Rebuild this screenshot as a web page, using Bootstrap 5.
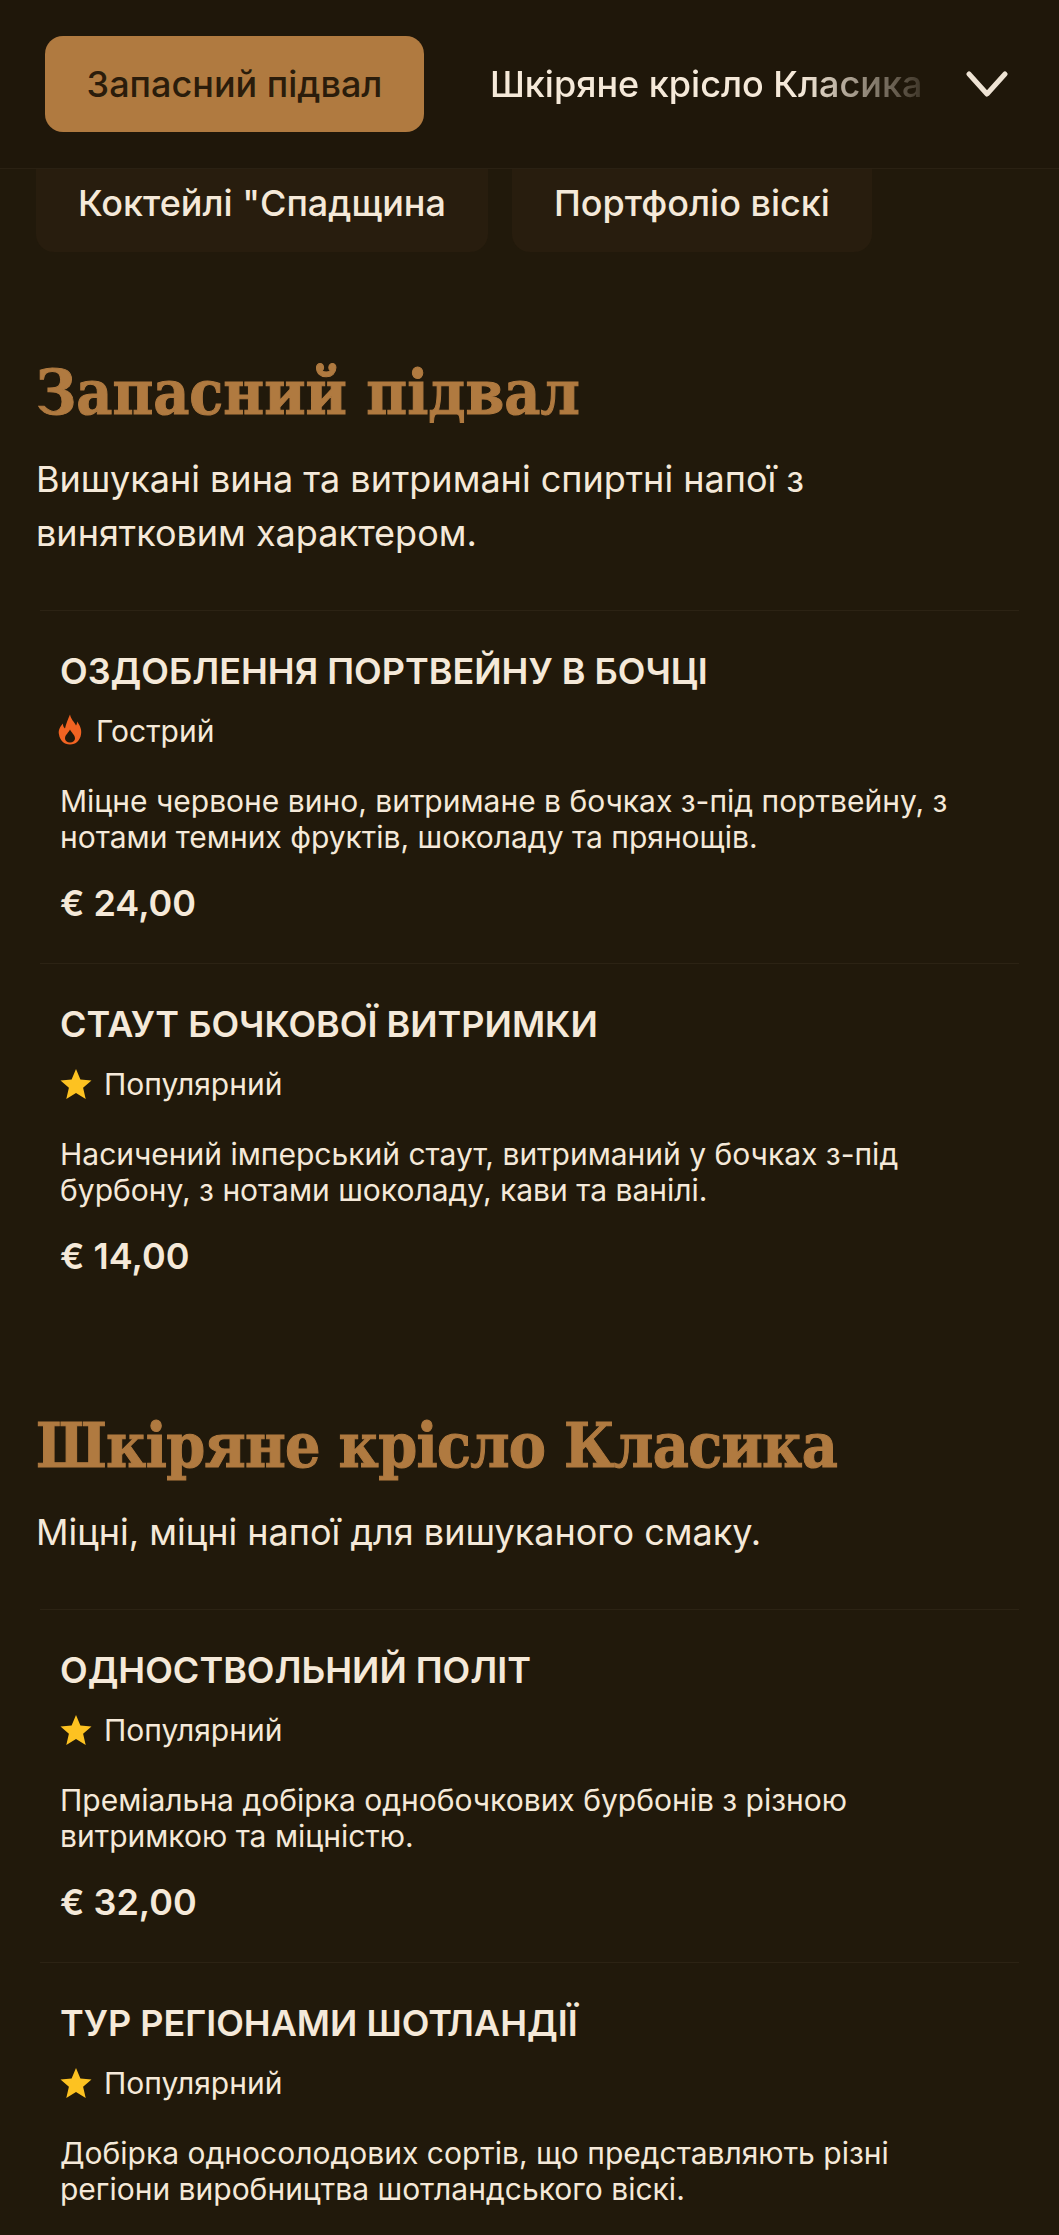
<!doctype html>
<html lang="uk"><head><meta charset="utf-8">
<link href="https://cdn.jsdelivr.net/npm/bootstrap@5.3.0/dist/css/bootstrap.min.css" rel="stylesheet">
<style>
html,body{background:#21190b;height:2235px;overflow:hidden}
body{font-family:Inter,"Noto Sans",sans-serif;color:#f5e9d9;margin:0}
.topbar{height:169px;padding:36px 33px 0 45px;background:#1f170a;border-bottom:1px solid #2a2113;gap:66px;position:relative;z-index:1}
.tab-active{width:379px;height:96px;background:#b07a40;color:#2a1c0b;border-radius:18px;font-size:36px;font-weight:500}
.tab-next{width:432px;font-size:36px;font-weight:500;white-space:nowrap;overflow:hidden;-webkit-mask-image:linear-gradient(90deg,#000 72%,rgba(0,0,0,.15));mask-image:linear-gradient(90deg,#000 72%,rgba(0,0,0,.15))}
.chev{margin-left:44px}
.chips{padding:0 36px;gap:24px;margin-top:-1px;height:84px}
.chip{background:#281d0e;border-radius:0 0 18px 18px;padding:0 42px 14px;font-size:36px;font-weight:500;height:84px;white-space:nowrap}
.sect{padding:0 36px}
.sect-title{font-family:"DejaVu Serif Condensed","DejaVu Serif",serif;font-weight:700;color:#b07a40;font-size:62px;line-height:82px;margin:0;-webkit-text-stroke:1px #b07a40}
.sect-title-tight{letter-spacing:-.7px}
.sect-desc{font-size:36px;line-height:54px;margin:18px 0 0}
.entry-list{margin-top:50px}
.entry{margin:0 4px;padding:41px 20px 39px;border-top:1px solid #2c2314}
.entry-name{font-size:36px;font-weight:600;line-height:38px;margin:0;text-transform:uppercase}
.entry-tag{font-size:30px;line-height:36px;margin-top:23px}
.entry-tag svg{margin-right:12px}
.entry-tag .fire{margin-left:-2px;margin-right:14px;margin-top:-3px}
.entry-text{font-size:30px;line-height:36px;margin:34px 0 0}
.entry-price{font-size:36px;font-weight:600;line-height:42px;margin-top:27px}
</style></head><body>
<div class="topbar d-flex align-items-start">
  <div class="tab-active d-flex align-items-center justify-content-center">Запасний підвал</div>
  <div class="d-flex align-items-center" style="height:96px">
    <div class="tab-next">Шкіряне крісло Класика</div>
    <svg class="chev" width="42" height="30" viewBox="0 0 42 30"><path d="M3 5 21 25 39 5" fill="none" stroke="#eee3d4" stroke-width="5" stroke-linecap="round" stroke-linejoin="round"/></svg>
  </div>
</div>
<div class="chips d-flex">
  <div class="chip d-flex align-items-center">Коктейлі "Спадщина</div>
  <div class="chip d-flex align-items-center">Портфоліо віскі</div>
</div>
<section class="sect" style="margin-top:100px">
  <h2 class="sect-title">Запасний підвал</h2>
  <p class="sect-desc">Вишукані вина та витримані спиртні напої з винятковим характером.</p>
  <div class="entry-list">
    <div class="entry">
      <h3 class="entry-name">Оздоблення портвейну в бочці</h3>
      <div class="entry-tag d-flex align-items-center"><svg class="fire" width="24" height="31" viewBox="0 0 24 30"><path fill="#f26322" fill-rule="evenodd" d="M12 0c1 5 4 7 6 11 1-1 1-3 1-4 3 4 5 8 4 13-1 6-5 10-11 10S2 26 1 20C0 16 2 12 5 9c0 2 0 3 2 5C8 9 10 5 12 0Zm0 15c-1 3-5 5-5 9 0 2 2 4 5 4s5-2 5-4c0-4-4-6-5-9Z"/></svg>Гострий</div>
      <p class="entry-text">Міцне червоне вино, витримане в бочках з-під портвейну, з нотами темних фруктів, шоколаду та прянощів.</p>
      <div class="entry-price">€ 24,00</div>
    </div>
    <div class="entry">
      <h3 class="entry-name">Стаут бочкової витримки</h3>
      <div class="entry-tag d-flex align-items-center"><svg width="32" height="32" viewBox="0 0 32 32"><path fill="#fdc221" d="M16 1l4.4 10.5 11.1.9-8.4 7.4 2.6 11.2-9.7-6-9.7 6 2.6-11.2L.5 12.4l11.1-.9Z"/></svg>Популярний</div>
      <p class="entry-text">Насичений імперський стаут, витриманий у бочках з-під бурбону, з нотами шоколаду, кави та ванілі.</p>
      <div class="entry-price">€ 14,00</div>
    </div>
  </div>
</section>
<section class="sect" style="margin-top:89px">
  <h2 class="sect-title sect-title-tight">Шкіряне крісло Класика</h2>
  <p class="sect-desc">Міцні, міцні напої для вишуканого смаку.</p>
  <div class="entry-list">
    <div class="entry">
      <h3 class="entry-name">Одноствольний політ</h3>
      <div class="entry-tag d-flex align-items-center"><svg width="32" height="32" viewBox="0 0 32 32"><path fill="#fdc221" d="M16 1l4.4 10.5 11.1.9-8.4 7.4 2.6 11.2-9.7-6-9.7 6 2.6-11.2L.5 12.4l11.1-.9Z"/></svg>Популярний</div>
      <p class="entry-text">Преміальна добірка однобочкових бурбонів з різною витримкою та міцністю.</p>
      <div class="entry-price">€ 32,00</div>
    </div>
    <div class="entry">
      <h3 class="entry-name">Тур регіонами Шотландії</h3>
      <div class="entry-tag d-flex align-items-center"><svg width="32" height="32" viewBox="0 0 32 32"><path fill="#fdc221" d="M16 1l4.4 10.5 11.1.9-8.4 7.4 2.6 11.2-9.7-6-9.7 6 2.6-11.2L.5 12.4l11.1-.9Z"/></svg>Популярний</div>
      <p class="entry-text">Добірка односолодових сортів, що представляють різні регіони виробництва шотландського віскі.</p>
    </div>
  </div>
</section>
<script src="https://cdn.jsdelivr.net/npm/bootstrap@5.3.0/dist/js/bootstrap.bundle.min.js"></script>
</body></html>
